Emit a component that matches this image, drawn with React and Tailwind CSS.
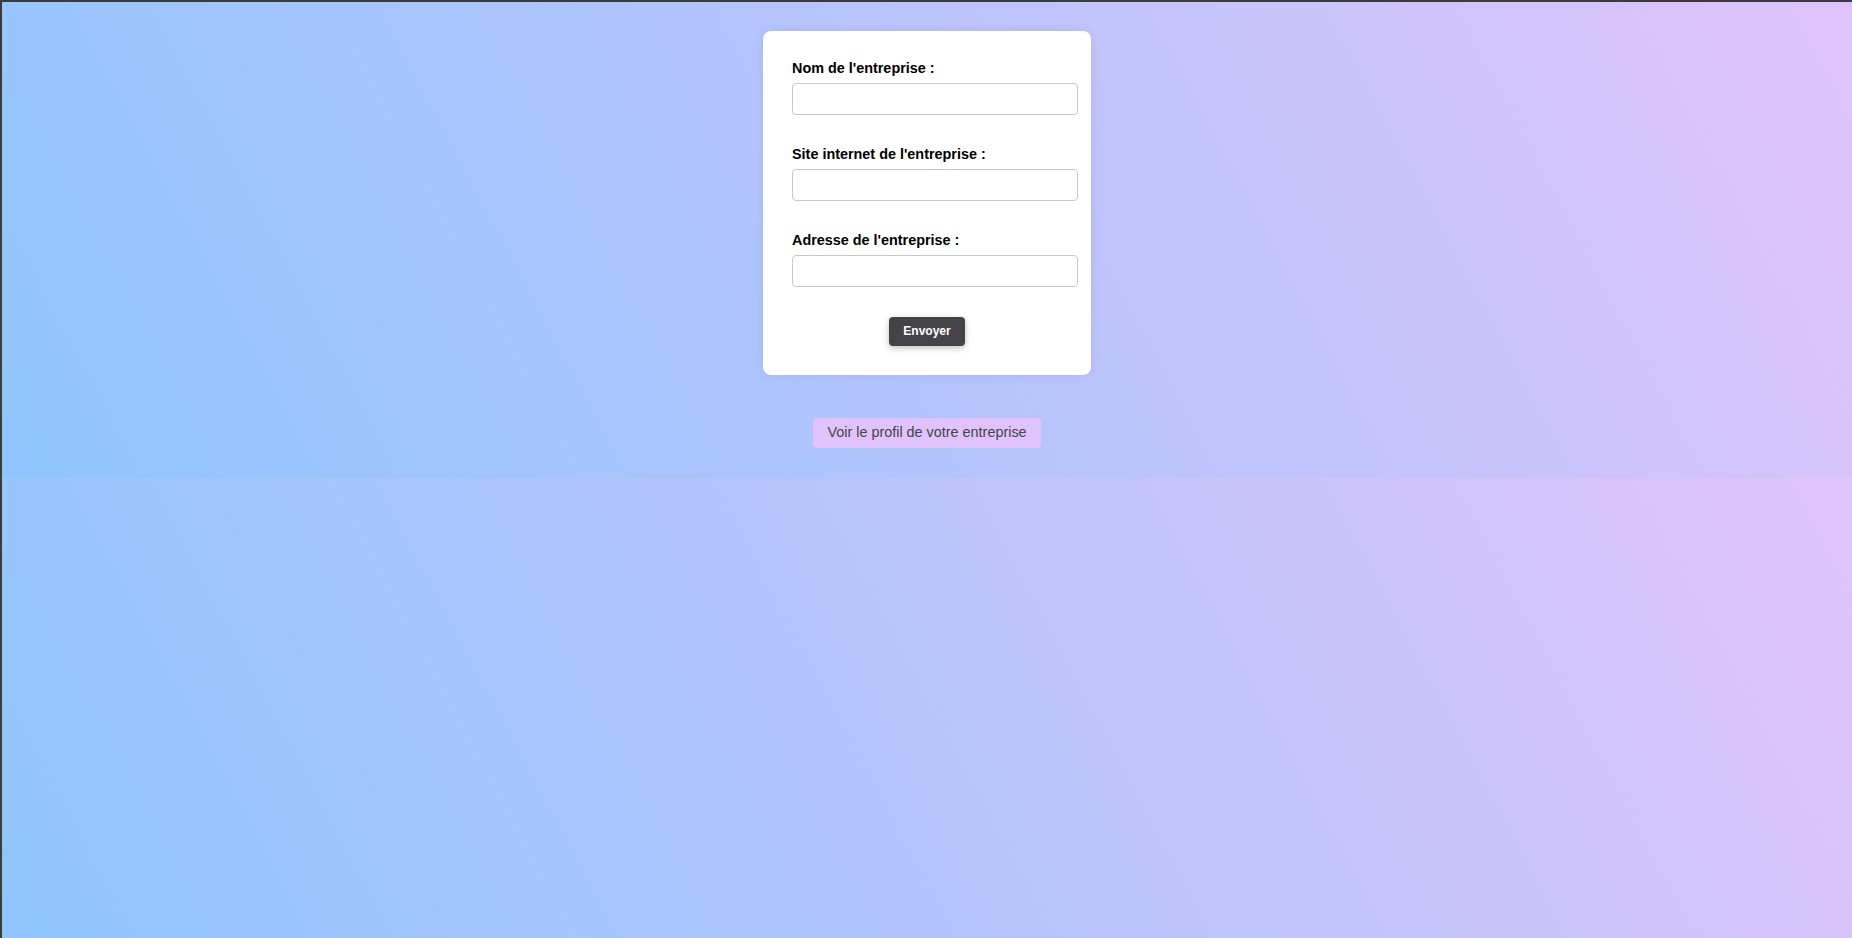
import { useState } from 'react';

const fields = [
  { name: 'nom', label: "Nom de l'entreprise :" },
  { name: 'site', label: "Site internet de l'entreprise :" },
  { name: 'adresse', label: "Adresse de l'entreprise :" },
];

const App = () => {
  const [values, setValues] = useState({ nom: '', site: '', adresse: '' });

  const handleChange = (e) => {
    setValues({ ...values, [e.target.name]: e.target.value });
  };

  return (
    <div
      className="min-h-screen border-t-2 border-l-2 border-[#3b3b3b] bg-[#8ec5fc] bg-[linear-gradient(62deg,#8ec5fc_0%,#e0c3fc_100%)] bg-[length:100%_476px] bg-repeat font-['Liberation_Sans',Arial,sans-serif]"
    >
      <div className="flex flex-col items-center pt-[29px] pb-[29px]">

        {/* Card */}
        <form
          onSubmit={e => e.preventDefault()}
          className="w-[328px] bg-white rounded-[8px] shadow-[0_0_10px_rgba(0,0,0,0.08)] pt-[29px] pb-[29px] pl-[29px] pr-[13px] flex flex-col"
        >
          {fields.map((f, i) => (
            <div key={f.name} className={i > 0 ? 'mt-[31.5px]' : ''}>
              <label className="block text-[14.4px] leading-[16.5px] font-bold text-black mb-[6px]">
                {f.label}
              </label>
              <input
                type="text"
                name={f.name}
                value={values[f.name]}
                onChange={handleChange}
                className="block w-[286px] h-[32px] px-2 bg-white border border-[#c8c8c8] rounded-[4px] text-[14px] outline-none"
              />
            </div>
          ))}

          <div className="flex justify-center mt-[30px] pr-[16px]">
            <button
              type="submit"
              className="w-[76px] h-[29px] bg-[#444446] text-white text-[12px] font-bold rounded-[4px] shadow-[0_2px_6px_rgba(0,0,0,0.25)]"
            >
              Envoyer
            </button>
          </div>
        </form>

        {/* Lien profil */}
        <a
          href="#"
          className="mt-[43px] h-[30px] w-[228px] flex items-center justify-center bg-[#e0c3fc] text-[#444] text-[14.4px] rounded-[4px]"
        >
          Voir le profil de votre entreprise
        </a>
      </div>
    </div>
  );
};

export default App;
